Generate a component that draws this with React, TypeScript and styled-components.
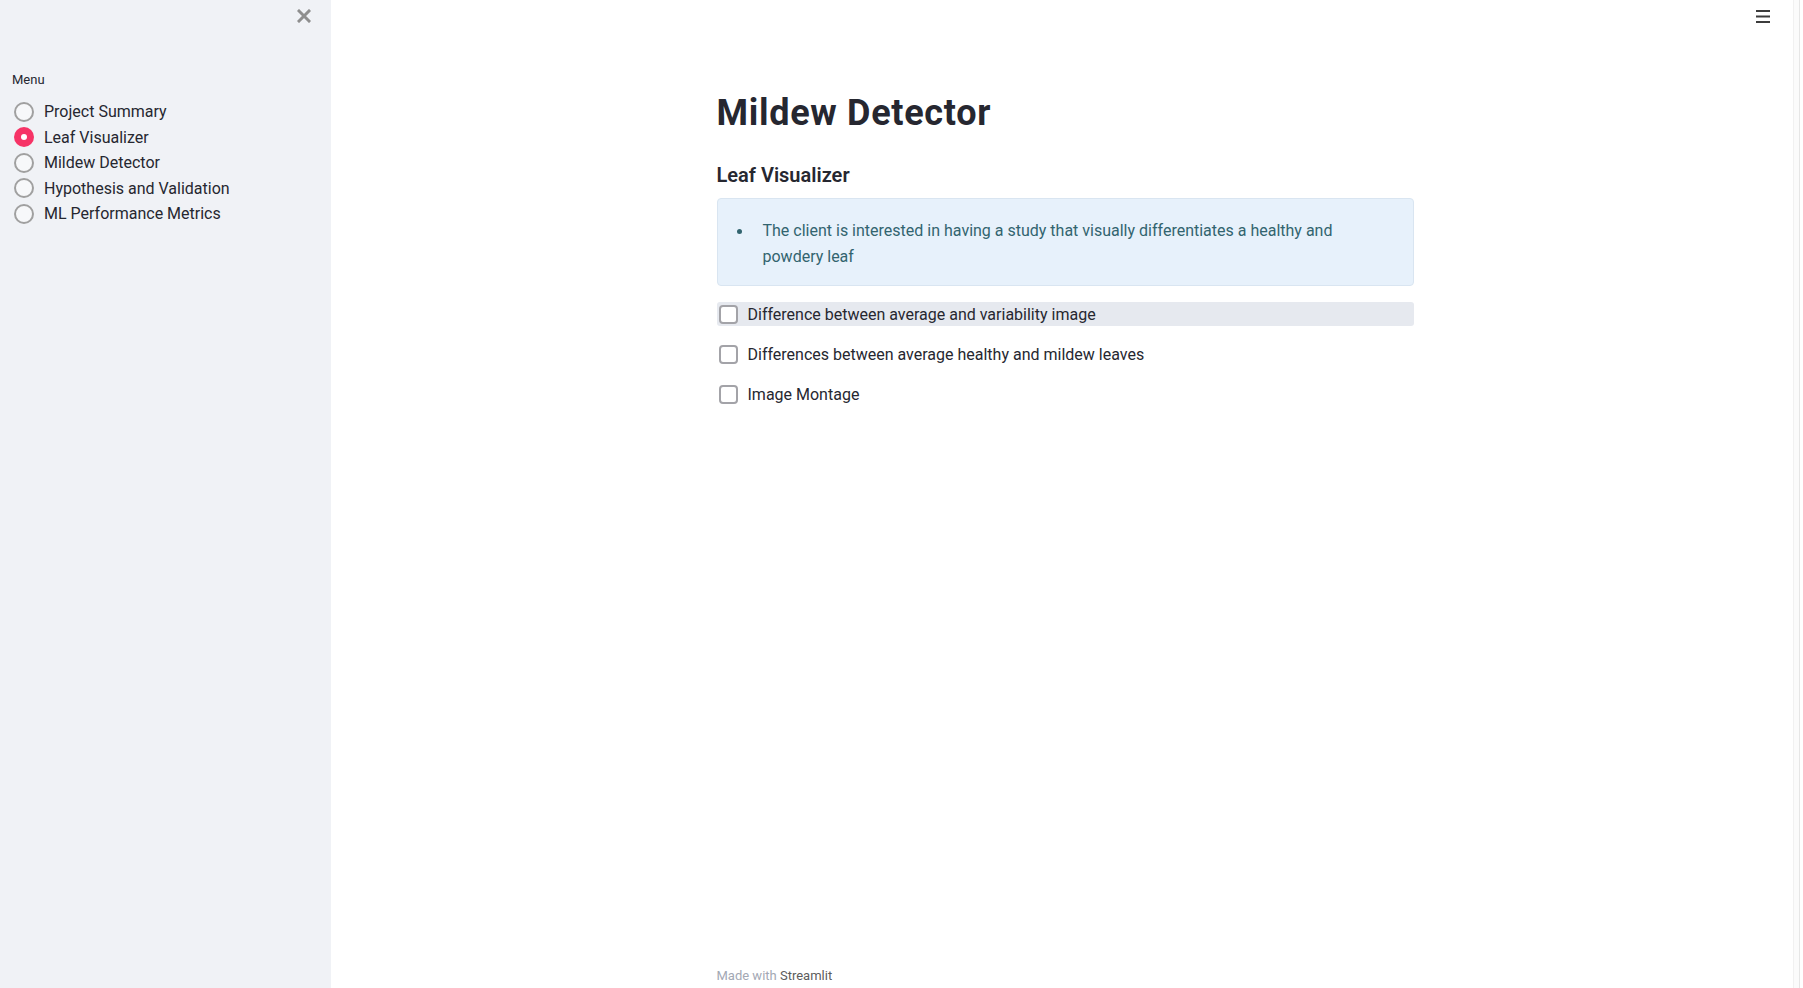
import React from "react";
import styled, { createGlobalStyle } from "styled-components";

const GlobalStyle = createGlobalStyle`
  html, body { margin: 0; padding: 0; }
  body {
    font-family: Roboto, "Liberation Sans", sans-serif;
    color: #262730;
    background: #ffffff;
  }
  * { box-sizing: border-box; }
`;

const Page = styled.div`
  display: flex;
  width: 100%;
  height: 988px;
  overflow: hidden;
`;

const Sidebar = styled.aside`
  width: 331px;
  flex: 0 0 331px;
  background: #f0f2f6;
  display: flex;
  flex-direction: column;
`;

const CloseRow = styled.div`
  height: 32px;
  display: flex;
  align-items: center;
  justify-content: flex-end;
  padding-right: 20px;
`;

const IconButton = styled.button`
  border: 0;
  background: transparent;
  padding: 0;
  display: flex;
  align-items: center;
  justify-content: center;
  cursor: pointer;
`;

const MenuLabel = styled.div`
  margin: 38px 0 8px 12px;
  font-size: 13px;
  line-height: 1.6;
  color: #262730;
`;

const RadioList = styled.div`
  display: flex;
  flex-direction: column;
  padding-left: 14px;
`;

const RadioRow = styled.label`
  display: flex;
  align-items: center;
  gap: 10px;
  height: 25.6px;
  font-size: 16px;
  color: #262730;
  cursor: pointer;
`;

const RadioDot = styled.span<{ $checked: boolean }>`
  width: 20px;
  height: 20px;
  border-radius: 50%;
  flex: 0 0 20px;
  display: flex;
  align-items: center;
  justify-content: center;
  background: ${(p) => (p.$checked ? "#f63366" : "#f7f8fa")};
  border: ${(p) => (p.$checked ? "none" : "2px solid #a0a0a0")};
  &::after {
    content: "";
    width: 6px;
    height: 6px;
    border-radius: 50%;
    background: #ffffff;
    display: ${(p) => (p.$checked ? "block" : "none")};
  }
`;

const Main = styled.main`
  flex: 1;
  display: flex;
  flex-direction: column;
  min-width: 0;
`;

const Toolbar = styled.div`
  height: 34px;
  display: flex;
  justify-content: flex-end;
  align-items: flex-start;
  padding: 10px 23px 0 0;
`;

const Content = styled.div`
  width: 697px;
  margin: 0 auto;
  padding-top: 58px;
  position: relative;
  left: 3px;
  display: flex;
  flex-direction: column;
`;

const Title = styled.h1`
  margin: 0;
  font-size: 36px;
  line-height: 1.2;
  font-weight: 700;
  letter-spacing: 0.7px;
  color: #262730;
`;

const Subheader = styled.h3`
  margin: 28px 0 0 0;
  font-size: 20px;
  line-height: 1.2;
  font-weight: 600;
  color: #262730;
`;

const InfoBox = styled.div`
  margin-top: 11px;
  background: #e7f1fb;
  border: 1px solid #d9e5f1;
  border-radius: 4px;
  padding: 19px 16px 15px 16px;
  color: #32646f;
`;

const BulletList = styled.ul`
  margin: 0;
  padding: 0 0 0 29px;
  list-style: none;
`;

const BulletItem = styled.li`
  position: relative;
  font-size: 16px;
  line-height: 26px;
  &::before {
    content: "";
    position: absolute;
    left: -26px;
    top: 11px;
    width: 5px;
    height: 5px;
    border-radius: 50%;
    background: #32646f;
  }
`;

const CheckList = styled.div`
  margin-top: 16px;
  display: flex;
  flex-direction: column;
  gap: 16px;
`;

const CheckRow = styled.label<{ $hover?: boolean }>`
  display: flex;
  align-items: center;
  gap: 10px;
  height: 24px;
  padding-left: 2px;
  border-radius: 3px;
  background: ${(p) => (p.$hover ? "#e6e9ef" : "transparent")};
  font-size: 16px;
  color: #262730;
  cursor: pointer;
`;

const CheckBox = styled.span`
  width: 19px;
  height: 19px;
  flex: 0 0 19px;
  border: 2px solid #a3a3a8;
  border-radius: 4px;
  background: #ffffff;
`;

const Footer = styled.footer`
  margin-top: auto;
  padding-bottom: 1px;
  width: 697px;
  align-self: center;
  position: relative;
  left: 3px;
  font-size: 13px;
  line-height: 1.6;
  color: #a3a8b4;
`;

const FooterBrand = styled.span`
  color: #5c5c5c;
`;

const ScrollTrack = styled.div`
  width: 10px;
  flex: 0 0 10px;
  border-left: 1px solid #f1f1f1;
  background: linear-gradient(to right, #fbfbfb 0, #fbfbfb 5px, #e6e6e6 5px, #e6e6e6 6px, #ffffff 6px);
`;

const menuItems = [
  "Project Summary",
  "Leaf Visualizer",
  "Mildew Detector",
  "Hypothesis and Validation",
  "ML Performance Metrics",
];

const checks = [
  "Difference between average and variability image",
  "Differences between average healthy and mildew leaves",
  "Image Montage",
];

export default function App() {
  return (
    <>
      <GlobalStyle />
      <Page>
        <Sidebar>
          <CloseRow>
            <IconButton aria-label="Close sidebar">
              <svg width="14" height="14" viewBox="0 0 14 14">
                <path d="M2 2 L12 12 M12 2 L2 12" stroke="#8e8e8e" strokeWidth="3" strokeLinecap="square" />
              </svg>
            </IconButton>
          </CloseRow>
          <MenuLabel>Menu</MenuLabel>
          <RadioList>
            {menuItems.map((m) => (
              <RadioRow key={m}>
                <RadioDot $checked={m === "Leaf Visualizer"} />
                {m}
              </RadioRow>
            ))}
          </RadioList>
        </Sidebar>
        <Main>
          <Toolbar>
            <IconButton aria-label="Menu">
              <svg width="14" height="13" viewBox="0 0 14 13">
                <rect x="0" y="0" width="14" height="2" fill="#3c3c3c" />
                <rect x="0" y="5.5" width="14" height="2" fill="#3c3c3c" />
                <rect x="0" y="11" width="14" height="2" fill="#3c3c3c" />
              </svg>
            </IconButton>
          </Toolbar>
          <Content>
            <Title>Mildew Detector</Title>
            <Subheader>Leaf Visualizer</Subheader>
            <InfoBox>
              <BulletList>
                <BulletItem>
                  The client is interested in having a study that visually differentiates a healthy and powdery leaf
                </BulletItem>
              </BulletList>
            </InfoBox>
            <CheckList>
              {checks.map((c, i) => (
                <CheckRow key={c} $hover={i === 0}>
                  <CheckBox />
                  {c}
                </CheckRow>
              ))}
            </CheckList>
          </Content>
          <Footer>
            Made with <FooterBrand>Streamlit</FooterBrand>
          </Footer>
        </Main>
        <ScrollTrack />
      </Page>
    </>
  );
}
